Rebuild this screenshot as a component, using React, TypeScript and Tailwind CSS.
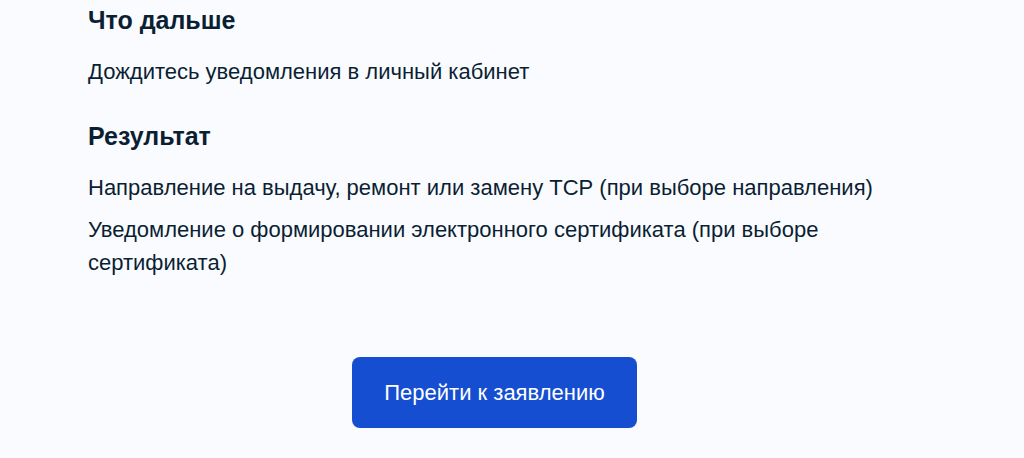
import React from 'react';

const App: React.FC = () => {
  return (
    <div
      className="min-h-screen bg-[#fafbff] text-[#0b1f33]"
      style={{ fontFamily: "'Liberation Sans', Arial, sans-serif" }}
    >
      <div className="ml-[88px] w-[813px] pt-[4px]">
        <h2 className="text-[25px] leading-[32px] font-bold">Что дальше</h2>
        <p className="mt-[19px] text-[22px] leading-[33px]">Дождитесь уведомления в личный кабинет</p>

        <h2 className="mt-[32px] text-[25px] leading-[32px] font-bold">Результат</h2>
        <div className="mt-[19px] flex flex-col gap-[9px] text-[22px] leading-[33px]">
          <p>Направление на выдачу, ремонт или замену ТСР (при выборе направления)</p>
          <p>Уведомление о формировании электронного сертификата (при выборе сертификата)</p>
        </div>

        <div className="mt-[78px] flex justify-center">
          <button className="w-[285px] h-[71px] rounded-[8px] bg-[#154ed0] text-white text-[22px] leading-[30px]">
            Перейти к заявлению
          </button>
        </div>
      </div>
    </div>
  );
};

export default App;
